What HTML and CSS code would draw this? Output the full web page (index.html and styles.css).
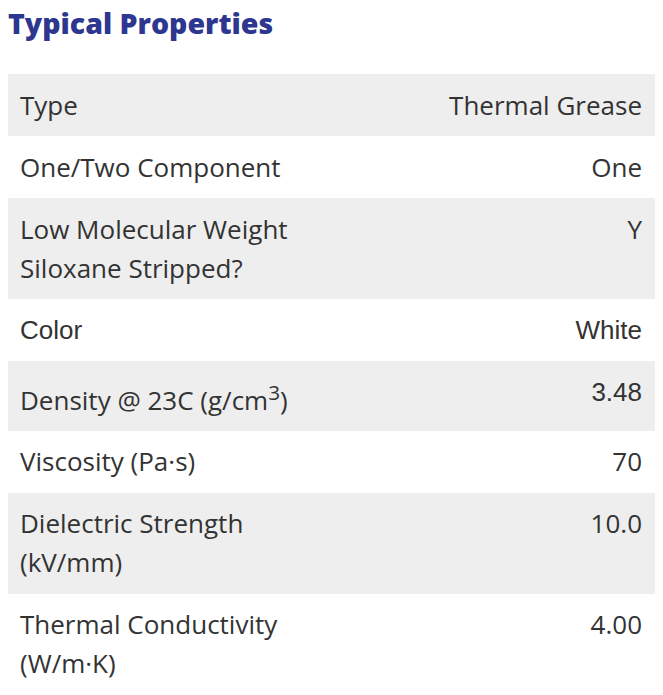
FILE: index.html
```html
<!DOCTYPE html>
<html lang="en">
<head>
<meta charset="utf-8">
<title>Typical Properties</title>
<link rel="stylesheet" href="styles.css">
</head>
<body>
<section class="props">
  <h2 class="props-title">Typical Properties</h2>
  <table class="props-table">
    <tbody>
      <tr><td class="label">Type</td><td class="value">Thermal Grease</td></tr>
      <tr><td class="label">One/Two Component</td><td class="value">One</td></tr>
      <tr><td class="label">Low Molecular Weight Siloxane Stripped?</td><td class="value">Y</td></tr>
      <tr class="alt-font"><td class="label">Color</td><td class="value">White</td></tr>
      <tr><td class="label">Density @ 23C (g/cm<sup>3</sup>)</td><td class="value alt-font">3.48</td></tr>
      <tr><td class="label">Viscosity (Pa·s)</td><td class="value">70</td></tr>
      <tr><td class="label">Dielectric Strength (kV/mm)</td><td class="value">10.0</td></tr>
      <tr><td class="label">Thermal Conductivity (W/m·K)</td><td class="value">4.00</td></tr>
    </tbody>
  </table>
</section>
</body>
</html>
```
FILE: styles.css
```css
body {
  margin: 8px;
  background: #ffffff;
  font-family: "Open Sans", "Noto Sans", sans-serif;
  color: #333333;
}

.props-title {
  margin: 0 0 36px;
  font-size: 28.5px;
  font-weight: 800;
  line-height: 30px;
  color: #2e3790;
}

.props-table {
  width: 100%;
  border-collapse: collapse;
  border-bottom: 1px solid #f0f0f0;
  font-size: 26px;
  line-height: 39px;
}

.props-table tr:nth-child(odd) {
  background: #eeeeee;
}

.props-table td {
  width: 50%;
  vertical-align: top;
  padding: 11.5px 13px 11.5px 12px;
}

.props-table .value {
  text-align: right;
}

.alt-font,
.alt-font td {
  font-family: "Liberation Sans", Arial, sans-serif;
}

.props-table sup {
  font-size: 0.8em;
}
```
